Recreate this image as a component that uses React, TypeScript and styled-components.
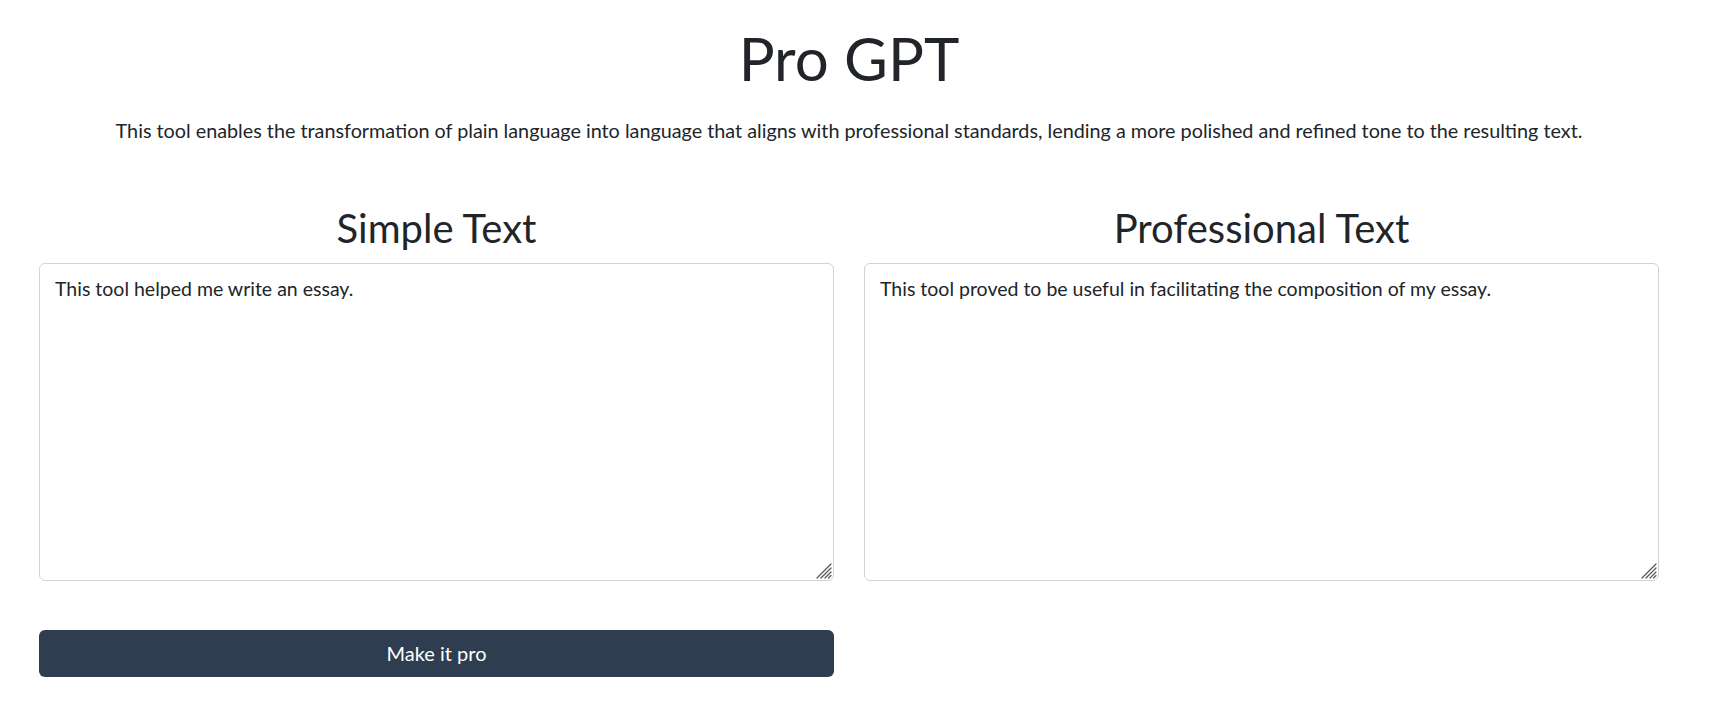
import React, { useState } from "react";
import styled, { createGlobalStyle } from "styled-components";

const GlobalStyle = createGlobalStyle`
  html, body {
    margin: 0;
    padding: 0;
    background: #ffffff;
  }
  body {
    font-family: Lato, "Noto Sans", "Liberation Sans", sans-serif;
    color: #212529;
  }
  * { box-sizing: border-box; }
`;

const Page = styled.main`
  width: 1700px;
  padding: 22px 41px 40px 39px;
  display: flex;
  flex-direction: column;
  align-items: stretch;
`;

const Title = styled.h1`
  margin: 0;
  font-size: 60px;
  font-weight: 400;
  line-height: 1.2;
  text-align: center;
`;

const Description = styled.p`
  margin: 22px 0 0;
  font-size: 19.8px;
  line-height: 1.5;
  text-align: center;
`;

const Columns = styled.div`
  margin-top: 58px;
  display: grid;
  grid-template-columns: 1fr 1fr;
  column-gap: 30px;
`;

const Column = styled.section`
  display: flex;
  flex-direction: column;
`;

const Heading = styled.h2`
  margin: 0 0 11px;
  font-size: 40px;
  font-weight: 400;
  line-height: 1.2;
  text-align: center;
`;

const Field = styled.div`
  position: relative;
`;

const TextBox = styled.textarea`
  display: block;
  width: 100%;
  height: 318px;
  padding: 10px 15px;
  border: 1px solid #d0d4d9;
  border-radius: 6px;
  font-family: Lato, "Noto Sans", "Liberation Sans", sans-serif;
  font-size: 19.5px;
  line-height: 1.5;
  color: #212529;
  background: #fff;
  outline: none;
  resize: none;
`;

const Grip = styled.svg`
  position: absolute;
  right: 2px;
  bottom: 2px;
  width: 17px;
  height: 17px;
  pointer-events: none;
`;

const Actions = styled.div`
  margin-top: 49px;
  display: grid;
  grid-template-columns: 1fr 1fr;
  column-gap: 30px;
`;

const ProButton = styled.button`
  height: 47px;
  border: none;
  border-radius: 6px;
  background: #2e3e50;
  color: #ffffff;
  font-family: Lato, "Noto Sans", "Liberation Sans", sans-serif;
  font-size: 20px;
  cursor: pointer;
`;

function ResizeGrip() {
  return (
    <Grip viewBox="0 0 17 17" aria-hidden="true">
      <g stroke="#555" strokeWidth="1.2" strokeLinecap="round">
        <line x1="16" y1="2" x2="2" y2="16" />
        <line x1="16" y1="6" x2="6" y2="16" />
        <line x1="16" y1="10" x2="10" y2="16" />
        <line x1="16" y1="13.5" x2="13.5" y2="16" />
      </g>
    </Grip>
  );
}

export default function App() {
  const [simple, setSimple] = useState("This tool helped me write an essay.");
  const [pro, setPro] = useState(
    "This tool proved to be useful in facilitating the composition of my essay."
  );
  return (
    <>
      <GlobalStyle />
      <Page>
        <Title>Pro GPT</Title>
        <Description>
          This tool enables the transformation of plain language into language that aligns with
          professional standards, lending a more polished and refined tone to the resulting text.
        </Description>
        <Columns>
          <Column>
            <Heading>Simple Text</Heading>
            <Field>
              <TextBox value={simple} onChange={(e) => setSimple(e.target.value)} />
              <ResizeGrip />
            </Field>
          </Column>
          <Column>
            <Heading>Professional Text</Heading>
            <Field>
              <TextBox value={pro} onChange={(e) => setPro(e.target.value)} />
              <ResizeGrip />
            </Field>
          </Column>
        </Columns>
        <Actions>
          <ProButton type="button">Make it pro</ProButton>
        </Actions>
      </Page>
    </>
  );
}
